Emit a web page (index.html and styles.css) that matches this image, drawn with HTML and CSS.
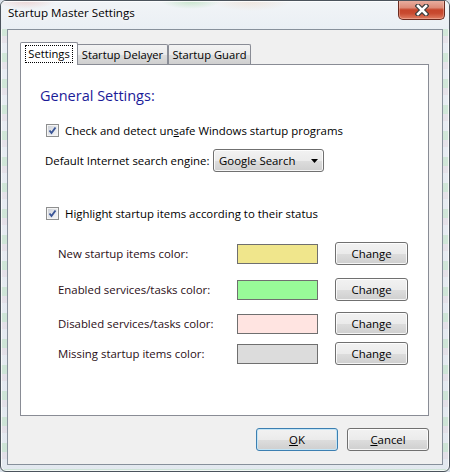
FILE: index.html
```html
<!DOCTYPE html>
<html lang="en">
<head>
<meta charset="utf-8">
<title>Startup Master Settings</title>
<link rel="stylesheet" href="styles.css">
</head>
<body>
<div class="window">
  <div class="titlebar">
    <span class="title">Startup Master Settings</span>
    <div class="close">
      <svg width="14" height="12" viewBox="0 0 14 12" aria-hidden="true">
        <path d="M3 2 L11 10 M11 2 L3 10" stroke="#3d3d3d" stroke-width="5" stroke-linecap="square" fill="none"/>
        <path d="M3 2 L11 10 M11 2 L3 10" stroke="#ffffff" stroke-width="2.6" stroke-linecap="square" fill="none"/>
      </svg>
    </div>
  </div>

  <div class="client">
    <div class="tabs">
      <div class="tab tab-active"><span class="focus">Settings</span></div>
      <div class="tab tab-delayer">Startup Delayer</div>
      <div class="tab tab-guard">Startup Guard</div>
    </div>

    <div class="panel">
      <h1 class="heading">General Settings:</h1>

      <label class="check check-unsafe">
        <span class="box">
          <svg width="13" height="13" viewBox="0 0 13 13" aria-hidden="true"><path d="M3.5 6.5 L5.5 9 L9.5 3.5" stroke="#3a5597" stroke-width="1.9" fill="none"/></svg>
        </span>
        <span>Check and detect un<u>s</u>afe Windows startup programs</span>
      </label>

      <div class="search-row">
        <span class="search-label">Default Internet search engine:</span>
        <div class="select">
          <span>Google Search</span>
          <svg width="7" height="4" viewBox="0 0 7 4" aria-hidden="true"><path d="M0 0 H7 L3.5 4 Z" fill="#000"/></svg>
        </div>
      </div>

      <label class="check check-highlight">
        <span class="box">
          <svg width="13" height="13" viewBox="0 0 13 13" aria-hidden="true"><path d="M3.5 6.5 L5.5 9 L9.5 3.5" stroke="#3a5597" stroke-width="1.9" fill="none"/></svg>
        </span>
        <span>Highlight startup items according to their status</span>
      </label>

      <div class="color-row row-new">
        <span class="color-label">New startup items color:</span>
        <span class="swatch swatch-new"></span>
        <button class="btn btn-change">Change</button>
      </div>
      <div class="color-row row-enabled">
        <span class="color-label">Enabled services/tasks color:</span>
        <span class="swatch swatch-enabled"></span>
        <button class="btn btn-change">Change</button>
      </div>
      <div class="color-row row-disabled">
        <span class="color-label">Disabled services/tasks color:</span>
        <span class="swatch swatch-disabled"></span>
        <button class="btn btn-change">Change</button>
      </div>
      <div class="color-row row-missing">
        <span class="color-label">Missing startup items color:</span>
        <span class="swatch swatch-missing"></span>
        <button class="btn btn-change">Change</button>
      </div>
    </div>

    <div class="actions">
      <button class="btn btn-action btn-default"><u>O</u>K</button>
      <button class="btn btn-action"><u>C</u>ancel</button>
    </div>
  </div>
</div>
</body>
</html>
```

FILE: styles.css
```css
* {
  box-sizing: border-box;
}

html,
body {
  margin: 0;
  padding: 0;
}

body {
  width: 450px;
  height: 472px;
  overflow: hidden;
  background: #d9e0e8;
  font-family: "Open Sans", "Noto Sans", sans-serif;
  font-size: 11.4px;
  color: #000;
}

/* Aero glass window frame */
.window {
  width: 450px;
  height: 472px;
  display: flex;
  flex-direction: column;
  border: 1px solid #4b535c;
  border-radius: 6px;
  overflow: hidden;
  background:
    repeating-linear-gradient(to bottom,
      rgba(150, 215, 150, 0.28) 0 9px,
      rgba(225, 200, 210, 0.28) 9px 16px,
      rgba(235, 238, 242, 0.1) 16px 26px),
    linear-gradient(to bottom, #e9eef3, #e2e8ef);
  box-shadow: inset 0 0 0 1px rgba(255, 255, 255, 0.75);
}

.titlebar {
  height: 28px;
  flex: none;
  display: flex;
  align-items: flex-start;
  justify-content: space-between;
  padding-left: 7px;
  background:
    radial-gradient(ellipse 30px 8px at 25px 0, rgba(220, 120, 110, 0.25), transparent),
    radial-gradient(ellipse 30px 8px at 190px 0, rgba(120, 200, 120, 0.35), transparent),
    radial-gradient(ellipse 40px 10px at 250px 0, rgba(230, 170, 120, 0.2), transparent),
    linear-gradient(to bottom, #f1f4f7, #eaeff4);
  box-shadow: inset 0 1px 0 rgba(255, 255, 255, 0.8);
}

.title {
  margin-top: 4px;
  font-size: 11.6px;
  line-height: 16px;
  color: #000;
  text-shadow: 0 0 6px #fff, 0 0 10px #fff;
}

.close {
  width: 47px;
  height: 20px;
  margin-top: -1px;
  margin-right: 4px;
  display: flex;
  align-items: center;
  justify-content: center;
  border: 1px solid #6a2a1f;
  border-top: none;
  border-radius: 0 0 5px 5px;
  background: linear-gradient(to bottom,
    #eab2a4 0%,
    #dd8b78 40%,
    #c6452b 52%,
    #c84a30 70%,
    #e07d62 100%);
  box-shadow: inset 0 0 0 1px rgba(255, 220, 210, 0.35);
}

/* Client area */
.client {
  flex: 1;
  margin: 0 6px 6px;
  border: 1px solid #87909b;
  background: #f0f0f0;
  display: flex;
  flex-direction: column;
}

.tabs {
  height: 22px;
  margin: 12px 0 0 12px;
  display: flex;
  align-items: flex-end;
  position: relative;
  z-index: 1;
}

.tab {
  height: 20px;
  display: flex;
  align-items: center;
  justify-content: center;
  border: 1px solid #898c95;
  border-bottom: none;
  border-radius: 2px 2px 0 0;
  background: linear-gradient(to bottom, #f3f3f3 0%, #ebebeb 50%, #dddddd 51%, #cfcfcf 100%);
  font-size: 11.2px;
  line-height: 14px;
  padding-top: 1px;
  white-space: nowrap;
}

.tab-active {
  width: 58px;
  height: 23px;
  margin-bottom: -1px;
  background: #fff;
  align-items: flex-start;
  padding-top: 2px;
}

.tab-delayer {
  width: 90px;
  border-left: none;
  border-top-left-radius: 0;
}

.tab-guard {
  width: 83px;
}

.focus {
  display: block;
  border: 1px dotted #000;
  padding: 1px 2px 1px;
  line-height: 14px;
}

.panel {
  height: 352px;
  margin: 0 13px 0 12px;
  border: 1px solid #898c95;
  background: #fff;
  display: flex;
  flex-direction: column;
  align-items: flex-start;
}

.heading {
  margin: 21px 0 0 19px;
  height: 20px;
  font-size: 14.5px;
  line-height: 20px;
  font-weight: normal;
  color: #1b1b98;
}

.check {
  height: 21px;
  margin-left: 25px;
  display: flex;
  align-items: center;
  gap: 6px;
  white-space: nowrap;
}

.check-unsafe {
  margin-top: 14px;
}

.check-highlight {
  margin-top: 31px;
}

.box {
  width: 13px;
  height: 13px;
  flex: none;
  display: block;
  border: 1px solid #8e8f8f;
  background: linear-gradient(135deg, #c8ccd3 0%, #e4e6ea 50%, #f7f7f7 100%);
  box-shadow: inset 0 0 0 1px #f4f4f4;
  position: relative;
}

.box svg {
  position: absolute;
  left: -1px;
  top: -1px;
}

.search-row {
  height: 23px;
  margin: 8px 0 0 24px;
  display: flex;
  align-items: center;
}

.search-label {
  width: 168px;
  white-space: nowrap;
}

.select {
  width: 111px;
  height: 23px;
  display: flex;
  align-items: center;
  justify-content: space-between;
  padding: 0 5px 0 5px;
  border: 1px solid #707070;
  border-radius: 3px;
  background: linear-gradient(to bottom, #f2f2f2 0%, #ebebeb 50%, #dddddd 51%, #cfcfcf 100%);
  box-shadow: inset 0 0 0 1px rgba(255, 255, 255, 0.8);
}

.color-row {
  height: 23px;
  margin-left: 37px;
  display: flex;
  align-items: center;
}

.row-new {
  margin-top: 18px;
}

.row-enabled {
  margin-top: 13px;
}

.row-disabled {
  margin-top: 11px;
}

.row-missing {
  margin-top: 7px;
}

.color-label {
  width: 179px;
  white-space: nowrap;
  color: #2a0e16;
}

.swatch {
  width: 81px;
  height: 20px;
  border: 1px solid #6f6f6f;
}

.swatch-new { background: #f0e68c; }
.swatch-enabled { background: #98fb98; }
.swatch-disabled { background: #ffe4e1; }
.swatch-missing { background: #dcdcdc; }

/* Win7 push button */
.btn {
  height: 23px;
  padding: 0;
  border: 1px solid #707070;
  border-radius: 3px;
  background: linear-gradient(to bottom, #f2f2f2 0%, #ebebeb 50%, #dddddd 51%, #cfcfcf 100%);
  box-shadow: inset 0 0 0 1px rgba(255, 255, 255, 0.8);
  font-family: inherit;
  font-size: 11.4px;
  color: #000;
  line-height: 14px;
}

.btn-change {
  width: 73px;
  margin-left: 17px;
}

.actions {
  margin: 12px 13px 0 0;
  display: flex;
  justify-content: flex-end;
  gap: 9px;
}

.btn-action {
  width: 82px;
}

.btn-default {
  border-color: #3c7fb1;
  box-shadow: inset 0 0 0 1px #c4e5f6;
}

u {
  text-decoration: underline;
  text-underline-offset: 1px;
}
```
